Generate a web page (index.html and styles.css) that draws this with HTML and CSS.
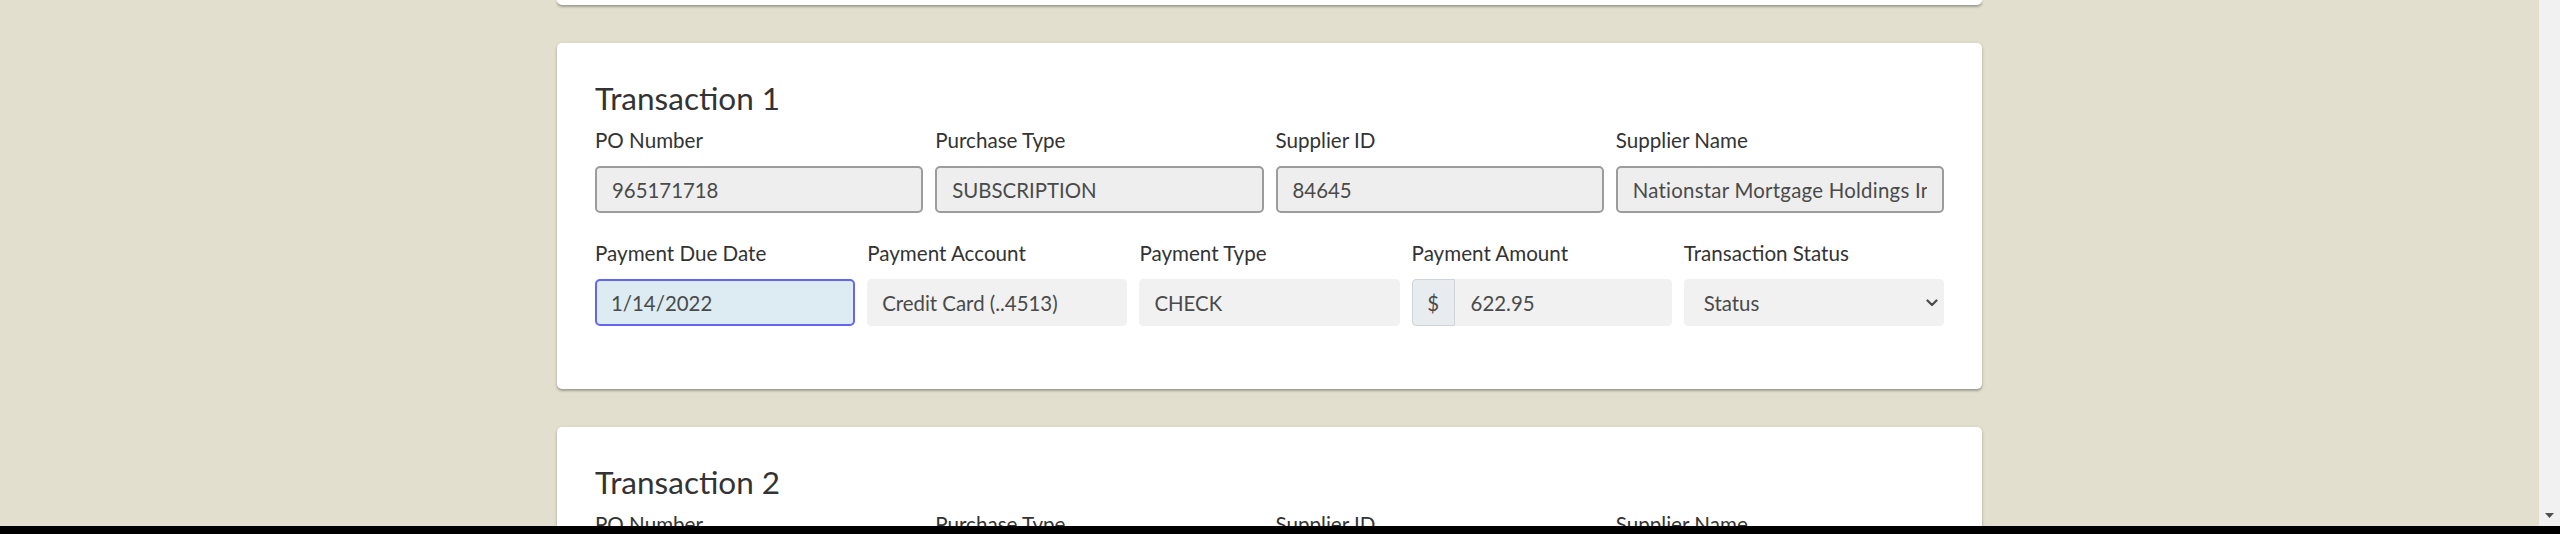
FILE: index.html
```html
<!DOCTYPE html>
<html lang="en">
<head>
<meta charset="utf-8">
<title>Transactions</title>
<link rel="stylesheet" href="styles.css">
</head>
<body>
<div class="screen">
  <div class="viewport">
    <div class="stack">
      <section class="card card-prev"></section>

      <section class="card">
        <h2 class="title">Transaction 1</h2>
        <div class="row row-4">
          <div class="field"><label class="label">PO Number</label><input class="ctl ctl-ro" type="text" value="965171718" readonly></div>
          <div class="field"><label class="label">Purchase Type</label><input class="ctl ctl-ro" type="text" value="SUBSCRIPTION" readonly></div>
          <div class="field"><label class="label">Supplier ID</label><input class="ctl ctl-ro" type="text" value="84645" readonly></div>
          <div class="field"><label class="label">Supplier Name</label><input class="ctl ctl-ro ctl-wide" type="text" value="Nationstar Mortgage Holdings Inc." readonly></div>
        </div>
        <div class="row row-5">
          <div class="field"><label class="label">Payment Due Date</label><input class="ctl ctl-focus" type="text" value="1/14/2022"></div>
          <div class="field"><label class="label">Payment Account</label><input class="ctl ctl-soft" type="text" value="Credit Card (..4513)"></div>
          <div class="field"><label class="label">Payment Type</label><input class="ctl ctl-soft" type="text" value="CHECK"></div>
          <div class="field"><label class="label">Payment Amount</label>
            <div class="group"><span class="addon">$</span><input class="ctl ctl-soft ctl-grouped" type="text" value="622.95"></div>
          </div>
          <div class="field"><label class="label">Transaction Status</label>
            <div class="select-wrap">
              <select class="ctl ctl-soft ctl-select"><option>Status</option></select>
              <svg class="chev" width="12" height="8" viewBox="0 0 12 8"><path d="M1.5 1.5 L6 6 L10.5 1.5" fill="none" stroke="#4a4a4a" stroke-width="2.2" stroke-linecap="round" stroke-linejoin="round"/></svg>
            </div>
          </div>
        </div>
      </section>

      <section class="card">
        <h2 class="title">Transaction 2</h2>
        <div class="row row-4">
          <div class="field"><label class="label">PO Number</label><input class="ctl ctl-ro" type="text" value="" readonly></div>
          <div class="field"><label class="label">Purchase Type</label><input class="ctl ctl-ro" type="text" value="" readonly></div>
          <div class="field"><label class="label">Supplier ID</label><input class="ctl ctl-ro" type="text" value="" readonly></div>
          <div class="field"><label class="label">Supplier Name</label><input class="ctl ctl-ro" type="text" value="" readonly></div>
        </div>
      </section>
    </div>
  </div>
  <div class="scrollbar">
    <svg class="sb-arrow" width="9" height="5" viewBox="0 0 9 5"><path d="M0 0 H9 L4.5 5 Z" fill="#505050"/></svg>
  </div>
  <div class="bottom-bar"></div>
</div>
</body>
</html>
```
FILE: styles.css
```css
* { box-sizing: border-box; }

html, body {
  margin: 0;
  padding: 0;
  height: 534px;
  overflow: hidden;
}

body {
  font-family: "Lato", "Noto Sans", sans-serif;
  color: #333;
}

.screen {
  display: grid;
  grid-template-columns: 1fr 21px;
  grid-template-rows: 526px 8px;
  width: 2560px;
  height: 534px;
}

.viewport {
  background: #e2dfce;
  overflow: hidden;
}

.stack {
  width: 1425px;
  margin: 0 auto;
  display: flex;
  flex-direction: column;
  gap: 38px;
}

.card {
  background: #fff;
  border-radius: 5px;
  box-shadow: 0 2px 2px rgba(0, 0, 0, 0.22), 0 1px 4px rgba(0, 0, 0, 0.12);
  padding: 36px 38px 63px;
}

.card-prev {
  height: 5px;
  padding: 0;
  border-radius: 0 0 5px 5px;
}

.title {
  margin: 0 0 11px;
  font-size: 31.5px;
  line-height: 38px;
  font-weight: 400;
  color: #333;
}

.row {
  display: grid;
  gap: 12px;
}

.row-4 { grid-template-columns: repeat(4, 1fr); }
.row-5 { grid-template-columns: repeat(5, 1fr); margin-top: 28px; }

.field {
  display: flex;
  flex-direction: column;
  min-width: 0;
}

.label {
  font-size: 20.6px;
  line-height: 24px;
  margin-bottom: 14px;
  color: #333;
}

.ctl {
  width: 100%;
  height: 47px;
  font-family: inherit;
  font-size: 20.4px;
  color: #4a4a4a;
  border-radius: 5px;
  outline: none;
  margin: 0;
}

.ctl-ro {
  background: #eeeeee;
  border: 2px solid #9c9c9c;
  padding: 0 15px;
}

.ctl-wide {
  letter-spacing: 0.25px;
}

.ctl-soft {
  background: #f1f1f1;
  border: 1px solid #f1f1f1;
  border-radius: 4px;
  padding: 0 14px;
}

.ctl-focus {
  background: #dcecf2;
  border: 2px solid #6366f1;
  padding: 0 14px;
}

.group {
  display: flex;
}

.addon {
  flex: 0 0 43px;
  height: 47px;
  display: flex;
  align-items: center;
  justify-content: center;
  background: #e9ecef;
  border: 1px solid #ced4da;
  border-radius: 4px 0 0 4px;
  font-size: 20.4px;
  color: #4a4a4a;
}

.ctl-grouped {
  flex: 1;
  min-width: 0;
  border-radius: 0 4px 4px 0;
  padding: 0 15px;
}

.select-wrap {
  position: relative;
}

.ctl-select {
  appearance: none;
  -webkit-appearance: none;
  padding: 0 19px;
}

.chev {
  position: absolute;
  right: 6px;
  top: 20px;
  pointer-events: none;
}

.scrollbar {
  background: #f1f1f1;
  display: flex;
  flex-direction: column;
  justify-content: flex-end;
  align-items: center;
  padding-bottom: 8px;
}

.sb-arrow { display: block; }

.bottom-bar {
  grid-column: 1 / -1;
  background: #000;
}
```
